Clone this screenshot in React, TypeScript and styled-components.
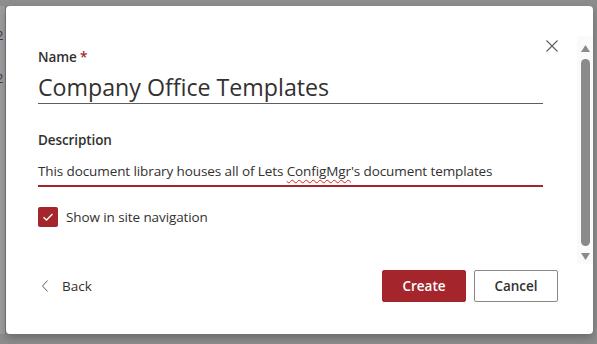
import styled, { createGlobalStyle } from "styled-components"

const GlobalStyle = createGlobalStyle`
  html, body {
    margin: 0;
    padding: 0;
    background: #8d8d8d;
    font-family: "Open Sans", "Noto Sans", sans-serif;
    color: #323130;
  }
`

const Page = styled.div`
  display: flex;
  width: 597px;
  height: 344px;
  box-sizing: border-box;
  padding: 6px 7px 10px 0;
  overflow: hidden;
`

const BehindStrip = styled.div`
  width: 6px;
  flex-shrink: 0;
  overflow: hidden;
  background: #9d9d9d;
  border-right: 1px solid #7a7a7a;
  box-sizing: border-box;
  font-size: 13px;
  color: #3b3b52;
  line-height: 1;
  padding-top: 23px;
  text-indent: -4px;

  div {
    height: 43px;
  }
`

const Dialog = styled.div`
  flex: 1;
  display: flex;
  background: #ffffff;
  border-radius: 4px;
  box-shadow: 0 4px 8px rgba(0, 0, 0, 0.25);
`

const Body = styled.div`
  flex: 1;
  display: flex;
  flex-direction: column;
  padding: 34px 19px 0 32px;
`

const HeaderRow = styled.div`
  display: flex;
  justify-content: space-between;
  align-items: flex-start;
`

const Fields = styled.div`
  width: 505px;
  display: flex;
  flex-direction: column;
`

const Label = styled.div<{ $top?: number }>`
  font-size: 13.5px;
  font-weight: 600;
  line-height: 20px;
  letter-spacing: -0.1px;
  margin-top: ${(p) => p.$top ?? 0}px;

  span {
    color: #a4262c;
  }
`

const CloseButton = styled.button`
  width: 12px;
  height: 12px;
  padding: 0;
  border: 0;
  background: none;
  display: flex;
  cursor: pointer;
`

const TitleInput = styled.div`
  margin-top: 5px;
  font-size: 23.2px;
  line-height: 31px;
  font-weight: 400;
  color: #323130;
  border-bottom: 1px solid #605e5c;
`

const DescInput = styled.div`
  margin-top: 11px;
  font-size: 13.5px;
  letter-spacing: -0.1px;
  line-height: 20px;
  padding-bottom: 4px;
  border-bottom: 2px solid #a4262c;
  white-space: nowrap;
`

const Misspelled = styled.span`
  text-decoration: underline wavy #e0201a;
  text-decoration-thickness: 1px;
  text-underline-offset: 3px;
  text-decoration-skip-ink: none;
`

const CheckRow = styled.div`
  margin-top: 20px;
  display: flex;
  align-items: center;
  gap: 8px;
  font-size: 13.5px;
  letter-spacing: -0.1px;
  line-height: 20px;
`

const CheckBox = styled.span`
  width: 20px;
  height: 20px;
  border-radius: 2px;
  background: #a4262c;
  display: flex;
  align-items: center;
  justify-content: center;
`

const Footer = styled.div`
  margin-top: 43px;
  width: 520px;
  display: flex;
  align-items: center;
`

const BackLink = styled.button`
  display: flex;
  align-items: center;
  gap: 14px;
  padding: 0 0 0 4px;
  border: 0;
  background: none;
  font-family: inherit;
  font-size: 13.5px;
  color: #323130;
  cursor: pointer;
`

const Spacer = styled.div`
  flex: 1;
`

const Button = styled.button<{ $primary?: boolean }>`
  height: 32px;
  min-width: 84px;
  box-sizing: border-box;
  border-radius: 2px;
  font-family: inherit;
  font-size: 13.5px;
  font-weight: 600;
  padding: 0 16px;
  margin-left: 8px;
  cursor: pointer;
  border: 1px solid ${(p) => (p.$primary ? "#a4262c" : "#8a8886")};
  background: ${(p) => (p.$primary ? "#a4262c" : "#ffffff")};
  color: ${(p) => (p.$primary ? "#ffffff" : "#323130")};
`

const ScrollBar = styled.div`
  width: 16px;
  margin: 30px 0 70px;
  background: #fafafa;
  display: flex;
  flex-direction: column;
  align-items: center;
  padding: 9px 0 4px;
  box-sizing: border-box;
  gap: 7px;
`

const Thumb = styled.div`
  flex: 1;
  width: 9px;
  border-radius: 5px;
  background: #8a8a8a;
`

const Arrow = ({ down }: { down?: boolean }) => (
  <svg width="9" height="7" viewBox="0 0 9 7">
    <polygon
      points={down ? "0,0 9,0 4.5,7" : "4.5,0 9,7 0,7"}
      fill="#8a8a8a"
    />
  </svg>
)

const App = () => {
  return (
    <>
      <GlobalStyle />
      <Page>
        <BehindStrip>
          <div>2</div>
          <div>2</div>
        </BehindStrip>
        <Dialog>
          <Body>
            <HeaderRow>
              <Label $top={7}>
                Name <span>*</span>
              </Label>
              <CloseButton aria-label="Close">
                <svg width="12" height="12" viewBox="0 0 12 12">
                  <path d="M0.5 0.5 L11.5 11.5 M11.5 0.5 L0.5 11.5" stroke="#605e5c" strokeWidth="1.1" />
                </svg>
              </CloseButton>
            </HeaderRow>
            <Fields>
              <TitleInput>Company Office Templates</TitleInput>
              <Label $top={26}>Description</Label>
              <DescInput>
                This document library houses all of Lets <Misspelled>ConfigMgr</Misspelled>'s document templates
              </DescInput>
              <CheckRow>
                <CheckBox>
                  <svg width="12" height="12" viewBox="0 0 12 12">
                    <polyline points="1.5,6.2 4.5,9 10.5,3" fill="none" stroke="#ffffff" strokeWidth="1.3" />
                  </svg>
                </CheckBox>
                Show in site navigation
              </CheckRow>
            </Fields>
            <Footer>
              <BackLink>
                <svg width="6" height="12" viewBox="0 0 6 12">
                  <polyline points="5.5,0.5 0.5,6 5.5,11.5" fill="none" stroke="#605e5c" strokeWidth="1" />
                </svg>
                Back
              </BackLink>
              <Spacer />
              <Button $primary>Create</Button>
              <Button>Cancel</Button>
            </Footer>
          </Body>
          <ScrollBar>
            <Arrow />
            <Thumb />
            <Arrow down />
          </ScrollBar>
        </Dialog>
      </Page>
    </>
  )
}

export default App
